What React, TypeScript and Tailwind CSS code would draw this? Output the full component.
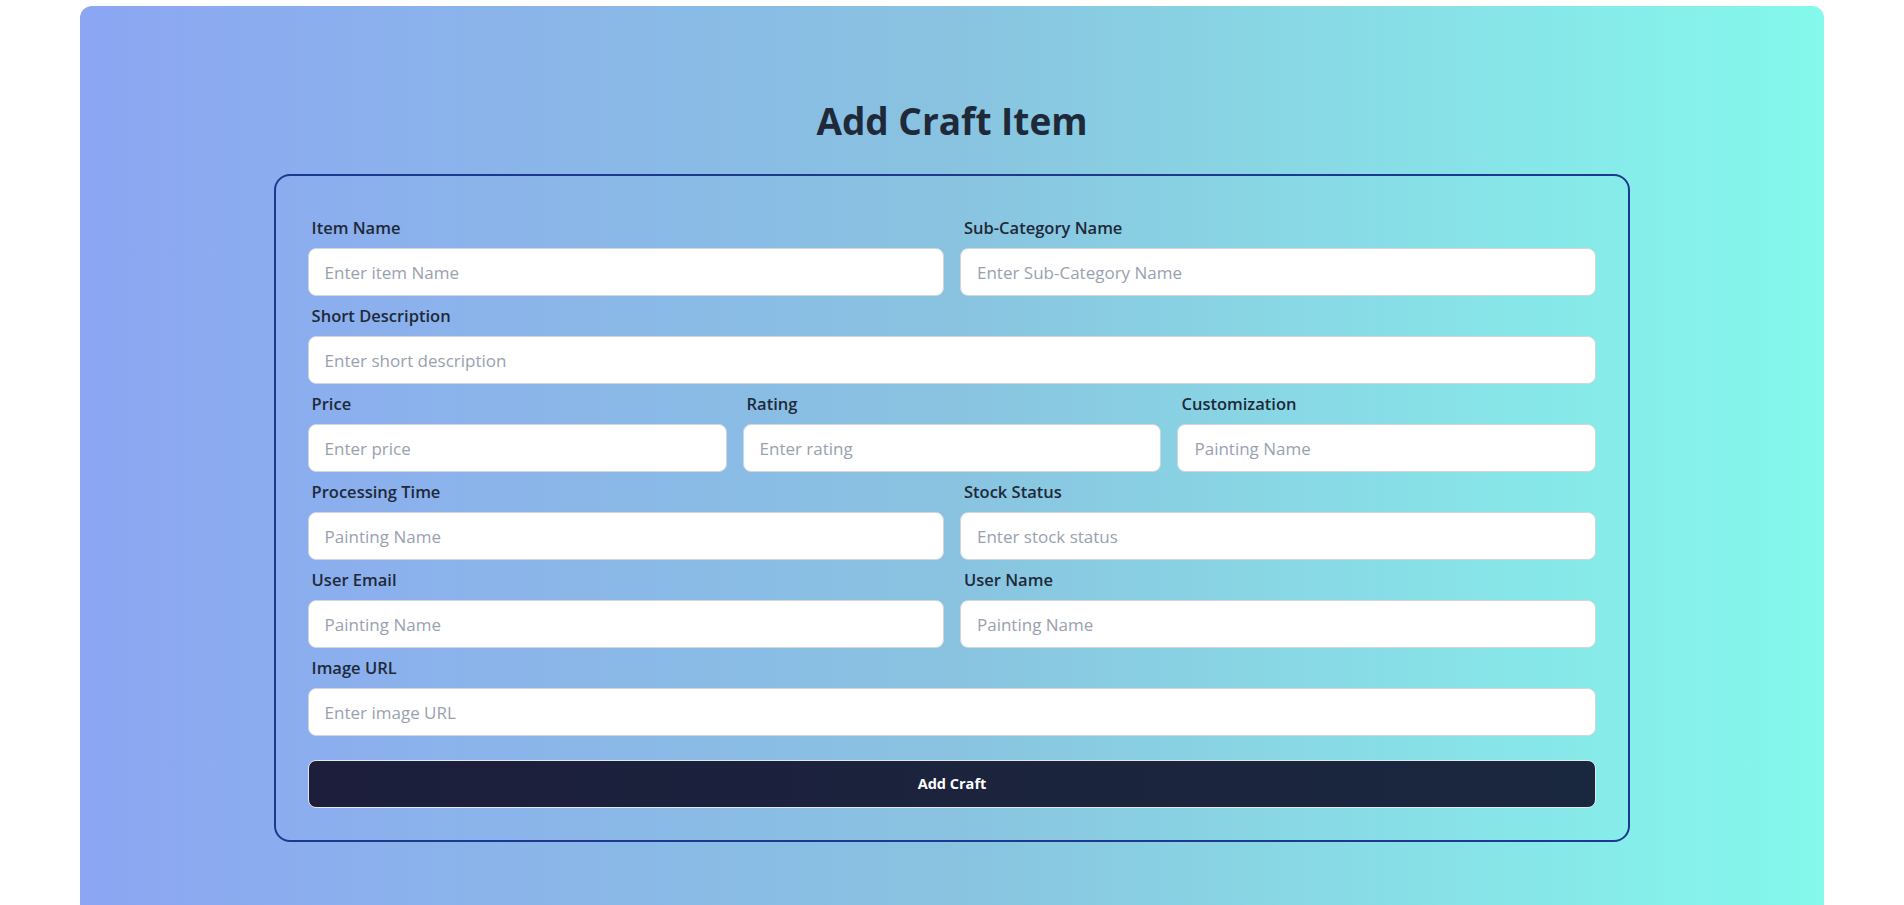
import React from "react";

type Field = {
  label: string;
  placeholder: string;
};

const rows: Field[][] = [
  [
    { label: "Item Name", placeholder: "Enter item Name" },
    { label: "Sub-Category Name", placeholder: "Enter Sub-Category Name" },
  ],
  [{ label: "Short Description", placeholder: "Enter short description" }],
  [
    { label: "Price", placeholder: "Enter price" },
    { label: "Rating", placeholder: "Enter rating" },
    { label: "Customization", placeholder: "Painting Name" },
  ],
  [
    { label: "Processing Time", placeholder: "Painting Name" },
    { label: "Stock Status", placeholder: "Enter stock status" },
  ],
  [
    { label: "User Email", placeholder: "Painting Name" },
    { label: "User Name", placeholder: "Painting Name" },
  ],
  [{ label: "Image URL", placeholder: "Enter image URL" }],
];

const gridCols: Record<number, string> = {
  1: "grid-cols-1",
  2: "grid-cols-2",
  3: "grid-cols-3",
};

function FormField({ label, placeholder }: Field) {
  return (
    <div className="flex flex-col">
      <label className="flex h-10 items-center px-1 text-[16.5px] font-semibold text-gray-800">
        {label}
      </label>
      <input
        type="text"
        placeholder={placeholder}
        className="h-12 w-full rounded-lg border border-gray-300 bg-white px-4 text-[17px] text-gray-800 outline-none placeholder:text-gray-400"
      />
    </div>
  );
}

export default function App() {
  return (
    <div className="min-h-screen bg-white pt-[6px] font-['Open_Sans',sans-serif]">
      <div className="mx-20 rounded-xl bg-linear-to-r from-[#8ca6f3] via-[#89c3e0] to-[#84f9ec] px-6 pb-[120px] pt-[95px]">
        <h2 className="text-center text-[37px] leading-10 font-bold text-gray-800">
          Add Craft Item
        </h2>

        <form
          onSubmit={(e) => e.preventDefault()}
          className="mx-auto mt-[33px] w-4/5 rounded-2xl border-2 border-blue-900 p-8"
        >
          {rows.map((row, i) => (
            <div key={i} className={`grid gap-x-4 ${gridCols[row.length]}`}>
              {row.map((field) => (
                <FormField key={field.label} {...field} />
              ))}
            </div>
          ))}

          {/* Submit */}
          <button
            type="submit"
            className="mt-6 h-12 w-full rounded-lg border border-gray-200 bg-linear-to-r from-[#1c1e3b] to-[#1a283f] text-[14.5px] font-bold text-white"
          >
            Add Craft
          </button>
        </form>
      </div>
    </div>
  );
}
